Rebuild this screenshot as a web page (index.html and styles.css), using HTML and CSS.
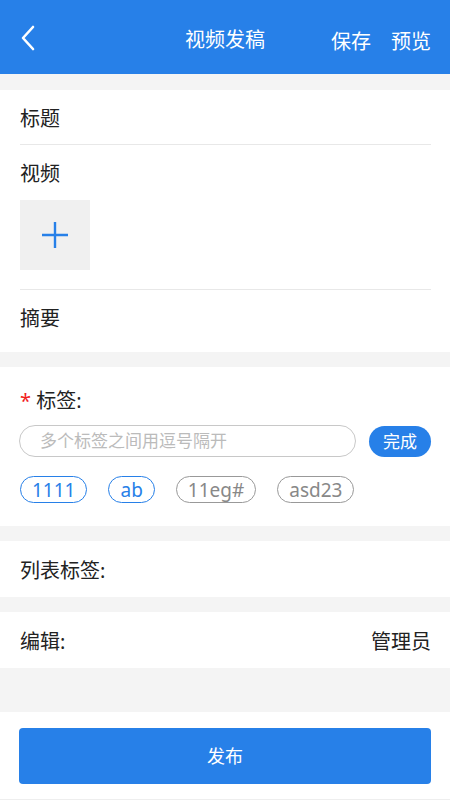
FILE: index.html
```html
<html>
  <head>
    <title>视频发稿</title>
    <meta charset="utf-8" />
    <link rel="stylesheet" href="styles.css">
  </head>
  <body>
    <div class="topbar">
      <div class="back">
        <svg width="16" height="26" viewBox="0 0 16 26">
          <path d="M13 2 L3 13 L13 24" fill="none" stroke="#fff" stroke-width="2.6" stroke-linecap="round" stroke-linejoin="round" />
        </svg>
      </div>
      <div class="title">视频发稿</div>
      <div class="actions">
        <span>保存</span>
        <span>预览</span>
      </div>
    </div>

    <div class="block first">
      <div class="row line">标题</div>
      <div class="row video">视频</div>
      <div class="upload">
        <svg width="28" height="28" viewBox="0 0 28 28">
          <path d="M14 1 V27 M1 14 H27" stroke="#2780e8" stroke-width="2.4" />
        </svg>
      </div>
      <div class="sep"></div>
      <div class="row">摘要</div>
    </div>

    <div class="block tags">
      <div class="tag-label"><span class="star">*</span> 标签:</div>
      <div class="tag-input">
        <div class="input">多个标签之间用逗号隔开</div>
        <div class="done">完成</div>
      </div>
      <div class="tag-list">
        <span class="tag on">1111</span>
        <span class="tag on">ab</span>
        <span class="tag">11eg#</span>
        <span class="tag">asd23</span>
      </div>
    </div>

    <div class="block simple">列表标签:</div>

    <div class="block simple split">
      <span>编辑:</span>
      <span>管理员</span>
    </div>

    <div class="footer">
      <div class="publish">发布</div>
    </div>
  </body>
</html>
```

FILE: styles.css
```css
body {
  margin: 0;
  background-color: #f4f4f4;
  font-family: "Noto Sans", "Noto Sans CJK SC", sans-serif;
  color: #222;
  font-size: 20px;
}
.topbar {
  height: 74px;
  background-color: #2780e8;
  color: #fff;
  display: flex;
  align-items: center;
  position: relative;
  padding: 0 19px 0 20px;
}
.back {
  width: 20px;
  display: flex;
  align-items: center;
  padding-top: 2px;
}
.title {
  position: absolute;
  left: 185px;
  top: 0;
  line-height: 80px;
  font-size: 20px;
}
.actions {
  margin-left: auto;
  display: flex;
  gap: 20px;
  font-size: 20px;
  padding-top: 6px;
}
.block {
  background-color: #fff;
  margin-top: 16px;
  padding: 0 19px 0 20px;
}
.first {
  padding-bottom: 8px;
}
.row {
  height: 54px;
  line-height: 58px;
}
.row.line {
  border-bottom: 1px solid #e8e8e8;
}
.row.video {
  height: 55px;
}
.upload {
  width: 70px;
  height: 70px;
  background-color: #f0f0f0;
  display: flex;
  align-items: center;
  justify-content: center;
}
.sep {
  height: 1px;
  background-color: #e8e8e8;
  margin-top: 19px;
}
.tags {
  margin-top: 15px;
  padding-top: 18px;
  padding-bottom: 23px;
}
.tag-label {
  line-height: 32px;
  height: 30px;
}
.star {
  color: #f21d1d;
}
.tag-input {
  display: flex;
  align-items: center;
  margin-top: 10px;
  gap: 13px;
}
.input {
  flex: 1;
  height: 30px;
  border: 1px solid #c8c8c8;
  border-radius: 16px;
  color: #bbb;
  font-size: 17px;
  line-height: 30px;
  padding-left: 20px;
  margin-left: -1px;
}
.done {
  width: 62px;
  height: 31px;
  border-radius: 16px;
  background-color: #2780e8;
  color: #fff;
  font-size: 17px;
  line-height: 31px;
  text-align: center;
}
.tag-list {
  display: flex;
  gap: 21px;
  margin-top: 19px;
}
.tag {
  height: 25px;
  border: 1px solid #999;
  color: #888;
  border-radius: 14px;
  padding: 0 11px;
  font-size: 19px;
  line-height: 26px;
}
.tag.on {
  border-color: #2780e8;
  color: #2780e8;
}
.simple {
  height: 56px;
  line-height: 60px;
  margin-top: 15px;
}
.split {
  display: flex;
  justify-content: space-between;
}
.footer {
  margin-top: 44px;
  background-color: #fff;
  padding: 16px 19px 15px 19px;
  border-bottom: 1px solid #eee;
}
.publish {
  height: 56px;
  background-color: #2780e8;
  border-radius: 4px;
  color: #fff;
  font-size: 18px;
  line-height: 56px;
  text-align: center;
}
```
